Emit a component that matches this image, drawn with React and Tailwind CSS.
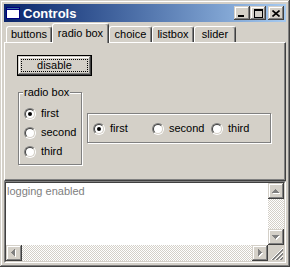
import React from 'react';

const raised =
  'shadow-[inset_-1px_-1px_#404040,inset_1px_1px_#d4d0c8,inset_-2px_-2px_#808080,inset_2px_2px_#ffffff]';

const Radio = ({ checked }) => (
  <div className="size-[12px] shrink-0 rounded-full border border-t-[#808080] border-l-[#808080] border-r-white border-b-white">
    <div className="size-[10px] rounded-full border border-t-[#404040] border-l-[#404040] border-r-[#d4d0c8] border-b-[#d4d0c8] bg-white flex items-center justify-center">
      {checked && <div className="size-[4px] rounded-full bg-black" />}
    </div>
  </div>
);

// pixel triangle, dir = up | down | left | right
const Arrow = ({ dir }) => {
  const rows = [1, 3, 5, 7];
  const rects = (dx, dy, fill) =>
    rows.map((w, i) => {
      const off = (7 - w) / 2;
      let x, y, rw, rh;
      if (dir === 'up') { x = 4 + off; y = 6 + i; rw = w; rh = 1; }
      if (dir === 'down') { x = 4 + off; y = 9 - i; rw = w; rh = 1; }
      if (dir === 'left') { x = 5 + i; y = 4 + off; rw = 1; rh = w; }
      if (dir === 'right') { x = 9 - i; y = 4 + off; rw = 1; rh = w; }
      return <rect key={fill + i} x={x + dx} y={y + dy} width={rw} height={rh} fill={fill} />;
    });
  return (
    <svg width="16" height="16" viewBox="0 0 16 16" shapeRendering="crispEdges">
      {rects(1, 1, '#ffffff')}
      {rects(0, 0, '#808080')}
    </svg>
  );
};

const ScrollBtn = ({ dir }) => (
  <div className={`size-[16px] shrink-0 bg-[#d4d0c8] ${raised}`}>
    <Arrow dir={dir} />
  </div>
);

const Track = ({ className }) => (
  <div className={`bg-[repeating-conic-gradient(#d4d0c8_0%_25%,#ffffff_0%_50%)] bg-[length:2px_2px] ${className}`} />
);

const Tab = ({ label, width, active }) =>
  active ? (
    <div
      className="relative z-10 h-[20px] -mb-px flex items-start justify-center pt-[4px] rounded-t-[3px] bg-[#d4d0c8] border-l border-t border-white border-r border-r-[#404040] shadow-[inset_-1px_0_#808080]"
      style={{ width }}
    >
      {label}
    </div>
  ) : (
    <div
      className="h-[16px] flex items-start justify-center pt-[2px] rounded-t-[3px] bg-[#d4d0c8] border-l border-t border-white border-r border-r-[#404040] shadow-[inset_-1px_0_#808080]"
      style={{ width }}
    >
      {label}
    </div>
  );

const TitleBtn = ({ children, className = '' }) => (
  <div className={`w-[16px] h-[14px] bg-[#d4d0c8] flex items-center justify-center ${raised} ${className}`}>
    {children}
  </div>
);

export default function App() {
  return (
    <div
      className="w-[290px] h-[267px] bg-[#d4d0c8] p-[4px] flex flex-col text-[11px] text-black leading-none shadow-[inset_-1px_-1px_#404040,inset_1px_1px_#d4d0c8,inset_-2px_-2px_#808080,inset_2px_2px_#ffffff]"
      style={{ fontFamily: '"Liberation Sans", Arial, sans-serif' }}
    >
      {/* title bar */}
      <div className="h-[18px] shrink-0 flex items-center bg-gradient-to-r from-[#0a246a] to-[#a6caf0] pl-[2px] pr-[2px]">
        <svg width="14" height="12" viewBox="0 0 14 12" shapeRendering="crispEdges">
          <rect x="0" y="0" width="14" height="12" fill="#000080" />
          <rect x="1" y="3" width="12" height="8" fill="#ffffff" />
          <rect x="1" y="1" width="12" height="1" fill="#3a6ea5" />
        </svg>
        <span className="ml-[3px] font-bold text-[13px] text-white">Controls</span>
        <div className="ml-auto flex items-center">
          <TitleBtn>
            <svg width="8" height="7" viewBox="0 0 8 7" shapeRendering="crispEdges">
              <rect x="0" y="5" width="6" height="2" fill="#000" />
            </svg>
          </TitleBtn>
          <TitleBtn>
            <svg width="9" height="9" viewBox="0 0 9 9" shapeRendering="crispEdges">
              <rect x="0" y="0" width="9" height="9" fill="#000" />
              <rect x="1" y="2" width="7" height="6" fill="#d4d0c8" />
            </svg>
          </TitleBtn>
          <TitleBtn className="ml-[2px]">
            <svg width="8" height="7" viewBox="0 0 8 7">
              <path d="M0.5 0.5 L7.5 6.5 M7.5 0.5 L0.5 6.5" stroke="#000" strokeWidth="1.6" />
            </svg>
          </TitleBtn>
        </div>
      </div>

      {/* tabs */}
      <div className="mt-[1px] h-[19px] shrink-0 flex items-end pl-[2px]">
        <Tab label="buttons" width={46} />
        <Tab label="radio box" width={57} active />
        <Tab label="choice" width={43} />
        <Tab label="listbox" width={42} />
        <Tab label="slider" width={42} />
      </div>

      {/* panel */}
      <div className="h-[139px] shrink-0 flex flex-col border-l border-t border-white border-r border-b border-r-[#404040] border-b-[#404040] shadow-[inset_-1px_-1px_#808080]">
        <div className="ml-[12px] mt-[12px] w-[75px] h-[21px] border border-black p-0">
          <div className={`w-full h-full p-[3px] ${raised}`}>
            <div className="w-full h-full border border-dotted border-black flex items-center justify-center">
              disable
            </div>
          </div>
        </div>

        <div className="flex items-start ml-[13px] mt-[16px]">
          <div className="relative w-[64px] h-[73px] border border-[#808080] shadow-[1px_1px_0_#ffffff,inset_1px_1px_0_#ffffff] pt-[11px] pl-[5px]">
            <span className="absolute left-[4px] -top-[6px] bg-[#d4d0c8] px-[1px]">radio box</span>
            {['first', 'second', 'third'].map((t, i) => (
              <div key={t} className="h-[19px] flex items-center gap-[5px]">
                <Radio checked={i === 0} />
                <span>{t}</span>
              </div>
            ))}
          </div>

          <div className="ml-[5px] mt-[21px] w-[184px] h-[30px] border border-[#808080] shadow-[1px_1px_0_#ffffff,inset_1px_1px_0_#ffffff] pl-[5px] pt-[1px] flex items-center">
            {['first', 'second', 'third'].map((t, i) => (
              <div key={t} className="w-[60px] flex items-center gap-[5px]">
                <Radio checked={i === 0} />
                <span>{t}</span>
              </div>
            ))}
          </div>
        </div>
      </div>

      {/* log text control */}
      <div className="flex-1 flex flex-col border border-t-[#808080] border-l-[#808080] border-r-white border-b-white">
        <div className="flex-1 flex flex-col border border-t-[#404040] border-l-[#404040] border-r-[#d4d0c8] border-b-[#d4d0c8] bg-white">
          <div className="flex-1 flex">
            <div className="flex-1 pl-[1px] pt-[3px] text-[#808080]">logging enabled</div>
            <div className="w-[16px] flex flex-col">
              <ScrollBtn dir="up" />
              <Track className="flex-1" />
              <ScrollBtn dir="down" />
            </div>
          </div>
          <div className="h-[16px] shrink-0 flex">
            <ScrollBtn dir="left" />
            <Track className="flex-1" />
            <ScrollBtn dir="right" />
            <div className="size-[16px] bg-[#d4d0c8]">
              <svg width="16" height="16" viewBox="0 0 16 16" shapeRendering="crispEdges">
                {[0, 4, 8].map((o) => (
                  <g key={o}>
                    <path d={`M${3 + o} 15 L15 ${3 + o}`} stroke="#ffffff" strokeWidth="1" />
                    <path d={`M${4 + o} 15 L15 ${4 + o}`} stroke="#808080" strokeWidth="1" />
                    <path d={`M${5 + o} 15 L15 ${5 + o}`} stroke="#808080" strokeWidth="1" />
                  </g>
                ))}
              </svg>
            </div>
          </div>
        </div>
      </div>
    </div>
  );
}
